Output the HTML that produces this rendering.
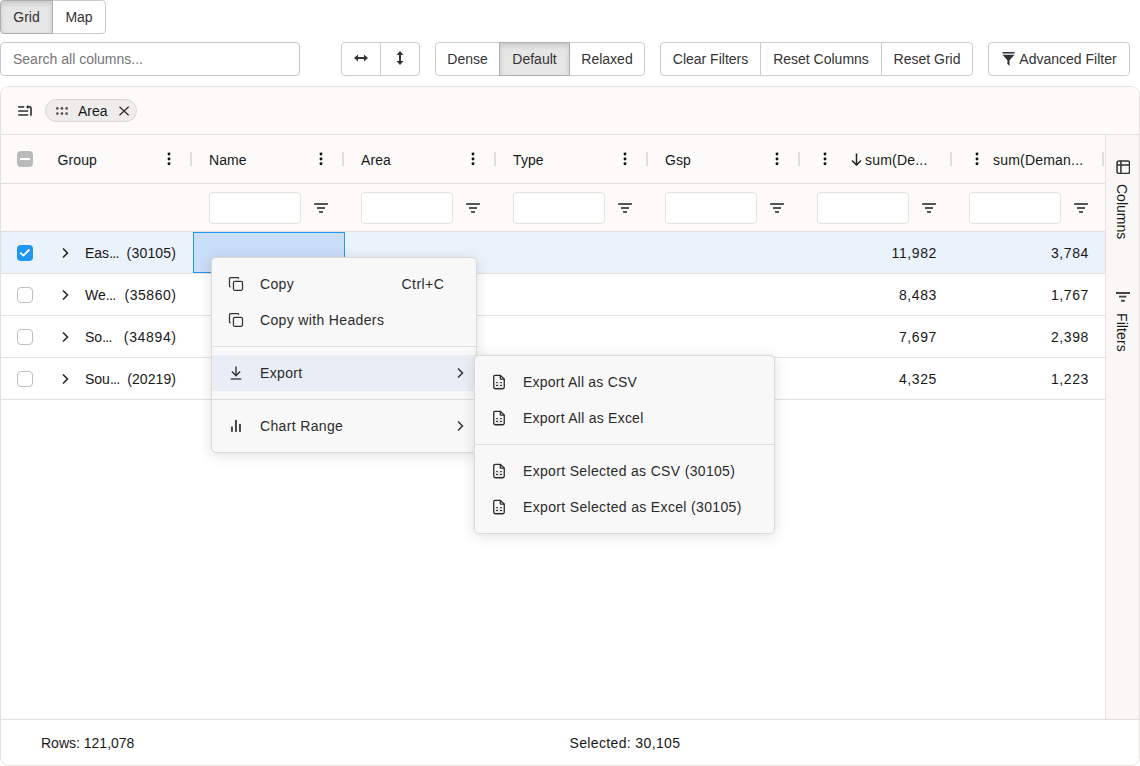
<!DOCTYPE html>
<html><head><meta charset="utf-8"><style>
*{box-sizing:border-box;margin:0;padding:0}
html,body{width:1140px;height:766px;overflow:hidden;background:#fff;font-family:"Liberation Sans",sans-serif;color:#212121}
div{position:absolute}
.btn{display:flex;align-items:center;justify-content:center;font-size:14px;color:#333;border:1px solid #ccc;background:#fff}
.btn.act{background:#e6e6e6;border-color:#adadad;box-shadow:inset 0 3px 5px rgba(0,0,0,.125);z-index:2}
.bg>div{position:relative;display:flex;align-items:center;justify-content:center;font-size:14px;color:#222;border-left:1px solid #c8c8c8;height:100%}
.bg>div:first-child{border-left:none}
.bg>div.act{background:#e5e5e5;box-shadow:inset 0 3px 5px rgba(0,0,0,.125)}
.search{left:0;top:42px;width:300px;height:34px;border:1px solid #c8c8c8;border-radius:4px;font-size:14px;color:#757575;padding-left:12px;line-height:32px}
.grid{left:0;top:86px;width:1140px;height:680px;border:1px solid #e6dfda;border-radius:9px;overflow:hidden;background:#fff}
.ht{font-size:14px;color:#181818;line-height:16px;letter-spacing:0.1px;white-space:nowrap}
.ct{font-size:14px;color:#181818;line-height:16px;letter-spacing:0.3px;white-space:nowrap}
.sep{width:2px;height:14px;background:#e6dcd8}
.kb{width:4px;height:14px}
.kb i{position:absolute;left:0;width:4px;height:4px;border-radius:50%;background:#111}
.finp{width:92px;height:32px;border:1px solid #e6dfda;border-radius:4px;background:#fff}
.fic{width:15px;height:11px}
.fic i{position:absolute;height:2px;background:#333}
.cb{width:16px;height:16px;border:1px solid #bfbfbf;border-radius:4px;background:#fff}
.menu{background:#f8f8f8;border:1px solid #dcdad8;border-radius:5px;box-shadow:0 2px 14px rgba(0,0,0,.13)}
.mt{font-size:14px;color:#2b2b2b;letter-spacing:0.35px;line-height:16px;white-space:nowrap}
.msep{left:0;right:0;height:1px;background:#e4dcd6}
</style></head><body>
<div class="btn act" style="left:0px;top:0px;width:53px;height:34px;border-radius:4px 0 0 4px">Grid</div>
<div class="btn" style="left:52px;top:0px;width:54px;height:34px;border-radius:0 4px 4px 0">Map</div>
<div class="search">Search all columns...</div>
<div class="btn" style="left:341px;top:42px;width:40px;height:34px;border-radius:4px 0 0 4px"><svg width="14" height="10" viewBox="0 0 14 10" style="margin-top:-2px"><path d="M0 5 L4 1.5 V8.5 Z M14 5 L10 1.5 V8.5 Z" fill="#333"/><rect x="3" y="4" width="8" height="2" fill="#333"/></svg></div>
<div class="btn" style="left:380px;top:42px;width:40px;height:34px;border-radius:0 4px 4px 0"><svg width="10" height="14" viewBox="0 0 10 14" style="margin-top:-2px"><path d="M5 0 L1.5 4 H8.5 Z M5 14 L1.5 10 H8.5 Z" fill="#333"/><rect x="4" y="3" width="2" height="8" fill="#333"/></svg></div>
<div class="btn" style="left:435px;top:42px;width:65px;height:34px;border-radius:4px 0 0 4px">Dense</div>
<div class="btn act" style="left:499px;top:42px;width:71px;height:34px;border-radius:0">Default</div>
<div class="btn" style="left:569px;top:42px;width:76px;height:34px;border-radius:0 4px 4px 0">Relaxed</div>
<div class="btn" style="left:660px;top:42px;width:101px;height:34px;border-radius:4px 0 0 4px">Clear Filters</div>
<div class="btn" style="left:760px;top:42px;width:122px;height:34px;border-radius:0">Reset Columns</div>
<div class="btn" style="left:881px;top:42px;width:92px;height:34px;border-radius:0 4px 4px 0">Reset Grid</div>
<div class="btn" style="left:988px;top:42px;width:142px;height:34px;border-radius:4px"><svg width="13" height="14" viewBox="0 0 13 14" style="margin-right:4px;margin-left:1px"><rect x="0.5" y="0" width="12" height="1.5" fill="#333"/><path d="M0.5 2.8 H12.5 L7.6 8.2 V13.8 L5.4 12 V8.2 Z" fill="#333"/></svg>Advanced Filter</div>
<div class="grid"><div style="left:0;top:0;width:1138px;height:48px;background:#fcfbfa;border-bottom:1px solid #e6dfda"></div><div style="left:0;top:48px;width:1104px;height:97px;background:#fcfbfa;border-bottom:1px solid #e6dfda"></div><div style="left:0;top:96px;width:1104px;height:1px;background:#e6dfda"></div><div style="left:0;top:145px;width:1104px;height:42px;background:#eaf2fc;border-bottom:1px solid #e6dfda"></div><div style="left:0;top:187px;width:1104px;height:42px;background:#fff;border-bottom:1px solid #e6dfda"></div><div style="left:0;top:229px;width:1104px;height:42px;background:#fff;border-bottom:1px solid #e6dfda"></div><div style="left:0;top:271px;width:1104px;height:42px;background:#fff;border-bottom:1px solid #e6dfda"></div><div style="left:1104px;top:48px;width:34px;height:584px;background:#f9f8f7;border-left:1px solid #e6dfda"></div><div style="left:0;top:632px;width:1138px;height:47px;border-top:1px solid #e6dfda;background:#fff"></div></div>
<svg style="position:absolute;left:18px;top:104px" width="15" height="13" viewBox="0 0 15 13"><rect x="0.2" y="2" width="6" height="1.8" fill="#4a4a4a"/><rect x="0.2" y="6.2" width="10" height="1.7" fill="#4a4a4a"/><rect x="0.2" y="10.1" width="10" height="1.7" fill="#4a4a4a"/><path d="M9.5 2.9 H11.5 Q13 2.9 13 4.4 V11.8" stroke="#333" stroke-width="1.7" fill="none"/><path d="M8 2.9 L10.3 0.9 V4.9 Z" fill="#222"/></svg>
<div style="left:45px;top:99px;width:92px;height:23px;border:1px solid #d9d6d3;border-radius:12px;background:#eeedec"></div>
<svg style="position:absolute;left:50px;top:100px" width="25" height="20" viewBox="0 0 25 20"><circle cx="7.3" cy="8.4" r="1.3" fill="#505050"/><circle cx="7.3" cy="13.6" r="1.3" fill="#505050"/><circle cx="11.95" cy="8.4" r="1.3" fill="#505050"/><circle cx="11.95" cy="13.6" r="1.3" fill="#505050"/><circle cx="16.6" cy="8.4" r="1.3" fill="#505050"/><circle cx="16.6" cy="13.6" r="1.3" fill="#505050"/></svg>
<div class="ht" style="left:78px;top:103px;letter-spacing:0px">Area</div>
<svg style="position:absolute;left:118px;top:105px" width="12" height="12" viewBox="0 0 12 12"><path d="M1.5 1.8 L10.7 10.3 M10.7 1.8 L1.5 10.3" stroke="#333" stroke-width="1.35"/></svg>
<div style="left:17px;top:151px;width:16px;height:16px;border-radius:4px;background:#bababa"></div>
<div style="left:20px;top:158px;width:10px;height:2px;background:#fff"></div>
<div class="ht" style="left:57.5px;top:152px">Group</div>
<svg style="position:absolute;left:167px;top:152px" width="4" height="14" viewBox="0 0 4 14"><circle cx="2" cy="2" r="1.45" fill="#111"/><circle cx="2" cy="7" r="1.45" fill="#111"/><circle cx="2" cy="11.7" r="1.45" fill="#111"/></svg>
<div class="sep" style="left:190px;top:152px"></div>
<div class="ht" style="left:209px;top:152px">Name</div>
<svg style="position:absolute;left:319px;top:152px" width="4" height="14" viewBox="0 0 4 14"><circle cx="2" cy="2" r="1.45" fill="#111"/><circle cx="2" cy="7" r="1.45" fill="#111"/><circle cx="2" cy="11.7" r="1.45" fill="#111"/></svg>
<div class="sep" style="left:342px;top:152px"></div>
<div class="finp" style="left:209px;top:192px"></div>
<svg style="position:absolute;left:314px;top:202px" width="15" height="12" viewBox="0 0 15 12"><rect x="0.1" y="1.1" width="13.8" height="1.8" fill="#444"/><rect x="3" y="5.1" width="8" height="1.8" fill="#444"/><rect x="5.1" y="9.1" width="3.9" height="1.8" fill="#444"/></svg>
<div class="ht" style="left:361px;top:152px">Area</div>
<svg style="position:absolute;left:471px;top:152px" width="4" height="14" viewBox="0 0 4 14"><circle cx="2" cy="2" r="1.45" fill="#111"/><circle cx="2" cy="7" r="1.45" fill="#111"/><circle cx="2" cy="11.7" r="1.45" fill="#111"/></svg>
<div class="sep" style="left:494px;top:152px"></div>
<div class="finp" style="left:361px;top:192px"></div>
<svg style="position:absolute;left:466px;top:202px" width="15" height="12" viewBox="0 0 15 12"><rect x="0.1" y="1.1" width="13.8" height="1.8" fill="#444"/><rect x="3" y="5.1" width="8" height="1.8" fill="#444"/><rect x="5.1" y="9.1" width="3.9" height="1.8" fill="#444"/></svg>
<div class="ht" style="left:513px;top:152px">Type</div>
<svg style="position:absolute;left:623px;top:152px" width="4" height="14" viewBox="0 0 4 14"><circle cx="2" cy="2" r="1.45" fill="#111"/><circle cx="2" cy="7" r="1.45" fill="#111"/><circle cx="2" cy="11.7" r="1.45" fill="#111"/></svg>
<div class="sep" style="left:646px;top:152px"></div>
<div class="finp" style="left:513px;top:192px"></div>
<svg style="position:absolute;left:618px;top:202px" width="15" height="12" viewBox="0 0 15 12"><rect x="0.1" y="1.1" width="13.8" height="1.8" fill="#444"/><rect x="3" y="5.1" width="8" height="1.8" fill="#444"/><rect x="5.1" y="9.1" width="3.9" height="1.8" fill="#444"/></svg>
<div class="ht" style="left:665px;top:152px">Gsp</div>
<svg style="position:absolute;left:775px;top:152px" width="4" height="14" viewBox="0 0 4 14"><circle cx="2" cy="2" r="1.45" fill="#111"/><circle cx="2" cy="7" r="1.45" fill="#111"/><circle cx="2" cy="11.7" r="1.45" fill="#111"/></svg>
<div class="sep" style="left:798px;top:152px"></div>
<div class="finp" style="left:665px;top:192px"></div>
<svg style="position:absolute;left:770px;top:202px" width="15" height="12" viewBox="0 0 15 12"><rect x="0.1" y="1.1" width="13.8" height="1.8" fill="#444"/><rect x="3" y="5.1" width="8" height="1.8" fill="#444"/><rect x="5.1" y="9.1" width="3.9" height="1.8" fill="#444"/></svg>
<svg style="position:absolute;left:823px;top:152px" width="4" height="14" viewBox="0 0 4 14"><circle cx="2" cy="2" r="1.45" fill="#111"/><circle cx="2" cy="7" r="1.45" fill="#111"/><circle cx="2" cy="11.7" r="1.45" fill="#111"/></svg>
<svg style="position:absolute;left:851px;top:153px" width="11" height="13" viewBox="0 0 11 13"><path d="M5.5 0.5 V12 M1 7.5 L5.5 12 L10 7.5" stroke="#222" stroke-width="1.5" fill="none"/></svg>
<div class="ht" style="left:865px;top:152px;letter-spacing:0.2px">sum(De...</div>
<div class="sep" style="left:950px;top:152px"></div>
<div class="finp" style="left:817px;top:192px"></div>
<svg style="position:absolute;left:922px;top:202px" width="15" height="12" viewBox="0 0 15 12"><rect x="0.1" y="1.1" width="13.8" height="1.8" fill="#444"/><rect x="3" y="5.1" width="8" height="1.8" fill="#444"/><rect x="5.1" y="9.1" width="3.9" height="1.8" fill="#444"/></svg>
<svg style="position:absolute;left:975px;top:152px" width="4" height="14" viewBox="0 0 4 14"><circle cx="2" cy="2" r="1.45" fill="#111"/><circle cx="2" cy="7" r="1.45" fill="#111"/><circle cx="2" cy="11.7" r="1.45" fill="#111"/></svg>
<div class="ht" style="left:993px;top:152px;letter-spacing:0.2px">sum(Deman...</div>
<div class="sep" style="left:1102px;top:152px"></div>
<div class="finp" style="left:969px;top:192px"></div>
<svg style="position:absolute;left:1074px;top:202px" width="15" height="12" viewBox="0 0 15 12"><rect x="0.1" y="1.1" width="13.8" height="1.8" fill="#444"/><rect x="3" y="5.1" width="8" height="1.8" fill="#444"/><rect x="5.1" y="9.1" width="3.9" height="1.8" fill="#444"/></svg>
<div style="left:17px;top:245px;width:16px;height:16px;border-radius:4px;background:#2196f3"></div>
<svg style="position:absolute;left:17px;top:245px" width="16" height="16" viewBox="0 0 16 16"><path d="M3.2 7.6 L6.4 10.6 L12.4 4.5" stroke="#fff" stroke-width="1.8" fill="none"/></svg>
<svg style="position:absolute;left:60.5px;top:247px" width="8" height="12" viewBox="0 0 8 12"><path d="M2 1.5 L6.5 6 L2 10.5" stroke="#222" stroke-width="1.5" fill="none"/></svg>
<div class="ct" style="left:85px;top:245px;letter-spacing:0">Eas<span style="letter-spacing:-0.7px">...</span></div>
<div class="ct" style="right:963.8px;top:245px;letter-spacing:0.2px">(30105)</div>
<div class="ct" style="right:203px;top:245px;letter-spacing:0.6px">11,982</div>
<div class="ct" style="right:51px;top:245px;letter-spacing:0.6px">3,784</div>
<div class="cb" style="left:17px;top:287px"></div>
<svg style="position:absolute;left:60.5px;top:289px" width="8" height="12" viewBox="0 0 8 12"><path d="M2 1.5 L6.5 6 L2 10.5" stroke="#222" stroke-width="1.5" fill="none"/></svg>
<div class="ct" style="left:85px;top:287px;letter-spacing:0">We<span style="letter-spacing:-0.7px">...</span></div>
<div class="ct" style="right:963.45px;top:287px;letter-spacing:0.55px">(35860)</div>
<div class="ct" style="right:203px;top:287px;letter-spacing:0.6px">8,483</div>
<div class="ct" style="right:51px;top:287px;letter-spacing:0.6px">1,767</div>
<div class="cb" style="left:17px;top:329px"></div>
<svg style="position:absolute;left:60.5px;top:331px" width="8" height="12" viewBox="0 0 8 12"><path d="M2 1.5 L6.5 6 L2 10.5" stroke="#222" stroke-width="1.5" fill="none"/></svg>
<div class="ct" style="left:85px;top:329px;letter-spacing:0">So<span style="letter-spacing:-0.7px">...</span></div>
<div class="ct" style="right:963.35px;top:329px;letter-spacing:0.65px">(34894)</div>
<div class="ct" style="right:203px;top:329px;letter-spacing:0.6px">7,697</div>
<div class="ct" style="right:51px;top:329px;letter-spacing:0.6px">2,398</div>
<div class="cb" style="left:17px;top:371px"></div>
<svg style="position:absolute;left:60.5px;top:373px" width="8" height="12" viewBox="0 0 8 12"><path d="M2 1.5 L6.5 6 L2 10.5" stroke="#222" stroke-width="1.5" fill="none"/></svg>
<div class="ct" style="left:85px;top:371px;letter-spacing:0">Sou<span style="letter-spacing:-0.7px">...</span></div>
<div class="ct" style="right:963.9px;top:371px;letter-spacing:0.1px">(20219)</div>
<div class="ct" style="right:203px;top:371px;letter-spacing:0.6px">4,325</div>
<div class="ct" style="right:51px;top:371px;letter-spacing:0.6px">1,223</div>
<div style="left:193px;top:232px;width:152px;height:41px;border:1px solid #2196f3;background:#c9def8"></div>
<svg style="position:absolute;left:1116px;top:160px" width="14" height="14" viewBox="0 0 14 14"><rect x="1.05" y="0.95" width="12.5" height="12.5" rx="2" stroke="#333" stroke-width="1.5" fill="none"/><path d="M1 4.9 H13.5 M4.9 1 V13.5" stroke="#333" stroke-width="1.5"/></svg>
<div class="ht" style="left:1114px;top:184px;writing-mode:vertical-rl;font-size:14px;letter-spacing:0px">Columns</div>
<svg style="position:absolute;left:1116px;top:292px" width="14" height="11" viewBox="0 0 14 11"><rect x="0" y="0" width="14" height="2" fill="#444"/><rect x="3" y="3.7" width="7.4" height="1.8" fill="#444"/><rect x="5.1" y="7.8" width="3.7" height="2" fill="#444"/></svg>
<div class="ht" style="left:1114px;top:313px;writing-mode:vertical-rl;font-size:14px;letter-spacing:0.1px">Filters</div>
<div class="ht" style="left:41px;top:735px;font-size:14px;letter-spacing:0">Rows: 121,078</div>
<div class="ht" style="left:569.5px;top:735px;font-size:14px;letter-spacing:0.36px">Selected: 30,105</div>
<div class="menu" style="left:211px;top:257px;width:266px;height:196px"></div>
<svg style="position:absolute;left:224px;top:272px" width="24" height="24" viewBox="0 0 24 24"><path d="M6.7 14.75 H6.3 Q5.5 14.75 5.5 13.9 V6.5 Q5.5 5.6 6.4 5.6 H13.9 Q14.7 5.6 14.7 6.4 V6.8" stroke="#333" stroke-width="1.25" fill="none"/><rect x="9.45" y="9.45" width="9.05" height="8.85" rx="1.2" stroke="#333" stroke-width="1.25" fill="none"/></svg>
<div class="mt" style="left:260px;top:276px">Copy</div>
<div class="mt" style="left:401.5px;top:276px;letter-spacing:0.45px">Ctrl+C</div>
<svg style="position:absolute;left:224px;top:308px" width="24" height="24" viewBox="0 0 24 24"><path d="M6.7 14.75 H6.3 Q5.5 14.75 5.5 13.9 V6.5 Q5.5 5.6 6.4 5.6 H13.9 Q14.7 5.6 14.7 6.4 V6.8" stroke="#333" stroke-width="1.25" fill="none"/><rect x="9.45" y="9.45" width="9.05" height="8.85" rx="1.2" stroke="#333" stroke-width="1.25" fill="none"/></svg>
<div class="mt" style="left:260px;top:312px">Copy with Headers</div>
<div class="msep" style="left:212px;width:264px;top:346px"></div>
<div style="left:212px;top:355px;width:264px;height:36px;background:#e9edf5"></div>
<svg style="position:absolute;left:228px;top:365px" width="16" height="16" viewBox="0 0 16 16"><path d="M8 1.5 V10.5 M3.9 6.6 L8 10.7 L12.1 6.6" stroke="#333" stroke-width="1.4" fill="none"/><path d="M2.7 14 H13.3" stroke="#4a4a4a" stroke-width="1.5"/></svg>
<div class="mt" style="left:260px;top:365px">Export</div>
<svg style="position:absolute;left:456px;top:367px" width="8" height="12" viewBox="0 0 8 12"><path d="M2 1.5 L6.5 6 L2 10.5" stroke="#333" stroke-width="1.5" fill="none"/></svg>
<div class="msep" style="left:212px;width:264px;top:399px"></div>
<svg style="position:absolute;left:228px;top:418px" width="16" height="16" viewBox="0 0 16 16"><rect x="2.95" y="8.6" width="2" height="5.3" fill="#4a4a4a"/><rect x="6.97" y="1.9" width="2" height="12" fill="#4a4a4a"/><rect x="10.98" y="5.9" width="2" height="8" fill="#4a4a4a"/></svg>
<div class="mt" style="left:260px;top:418px">Chart Range</div>
<svg style="position:absolute;left:456px;top:420px" width="8" height="12" viewBox="0 0 8 12"><path d="M2 1.5 L6.5 6 L2 10.5" stroke="#333" stroke-width="1.5" fill="none"/></svg>
<div class="menu" style="left:474px;top:355px;width:301px;height:179px"></div>
<svg style="position:absolute;left:492px;top:374px" width="14" height="16" viewBox="0 0 14 16"><path d="M3 1.35 H8.3 L12.25 5.1 V13 A1.75 1.75 0 0 1 10.5 14.75 H3.5 A1.75 1.75 0 0 1 1.75 13 V2.6 A1.25 1.25 0 0 1 3 1.35 Z" stroke="#2a2a2a" stroke-width="1.3" fill="none"/><path d="M8.3 1.35 V4.4 Q8.3 5.1 9 5.1 H12.25" stroke="#2a2a2a" stroke-width="1.3" fill="none"/><path d="M3 10 H11 M3 12.9 H11 M7 8 V14" stroke="#ccc" stroke-width="0.6"/><ellipse cx="5" cy="8.6" rx="1.05" ry="0.65" fill="#222"/><ellipse cx="9" cy="8.6" rx="1.05" ry="0.65" fill="#222"/><ellipse cx="5" cy="11.4" rx="1.05" ry="0.65" fill="#222"/><ellipse cx="9" cy="11.4" rx="1.05" ry="0.65" fill="#222"/></svg>
<div class="mt" style="left:523px;top:374px;letter-spacing:0.21px">Export All as CSV</div>
<svg style="position:absolute;left:492px;top:410px" width="14" height="16" viewBox="0 0 14 16"><path d="M3 1.35 H8.3 L12.25 5.1 V13 A1.75 1.75 0 0 1 10.5 14.75 H3.5 A1.75 1.75 0 0 1 1.75 13 V2.6 A1.25 1.25 0 0 1 3 1.35 Z" stroke="#2a2a2a" stroke-width="1.3" fill="none"/><path d="M8.3 1.35 V4.4 Q8.3 5.1 9 5.1 H12.25" stroke="#2a2a2a" stroke-width="1.3" fill="none"/><path d="M3 10 H11 M3 12.9 H11 M7 8 V14" stroke="#ccc" stroke-width="0.6"/><ellipse cx="5" cy="8.6" rx="1.05" ry="0.65" fill="#222"/><ellipse cx="9" cy="8.6" rx="1.05" ry="0.65" fill="#222"/><ellipse cx="5" cy="11.4" rx="1.05" ry="0.65" fill="#222"/><ellipse cx="9" cy="11.4" rx="1.05" ry="0.65" fill="#222"/></svg>
<div class="mt" style="left:523px;top:410px;letter-spacing:0.24px">Export All as Excel</div>
<svg style="position:absolute;left:492px;top:463px" width="14" height="16" viewBox="0 0 14 16"><path d="M3 1.35 H8.3 L12.25 5.1 V13 A1.75 1.75 0 0 1 10.5 14.75 H3.5 A1.75 1.75 0 0 1 1.75 13 V2.6 A1.25 1.25 0 0 1 3 1.35 Z" stroke="#2a2a2a" stroke-width="1.3" fill="none"/><path d="M8.3 1.35 V4.4 Q8.3 5.1 9 5.1 H12.25" stroke="#2a2a2a" stroke-width="1.3" fill="none"/><path d="M3 10 H11 M3 12.9 H11 M7 8 V14" stroke="#ccc" stroke-width="0.6"/><ellipse cx="5" cy="8.6" rx="1.05" ry="0.65" fill="#222"/><ellipse cx="9" cy="8.6" rx="1.05" ry="0.65" fill="#222"/><ellipse cx="5" cy="11.4" rx="1.05" ry="0.65" fill="#222"/><ellipse cx="9" cy="11.4" rx="1.05" ry="0.65" fill="#222"/></svg>
<div class="mt" style="left:523px;top:463px;letter-spacing:0.33px">Export Selected as CSV (30105)</div>
<svg style="position:absolute;left:492px;top:499px" width="14" height="16" viewBox="0 0 14 16"><path d="M3 1.35 H8.3 L12.25 5.1 V13 A1.75 1.75 0 0 1 10.5 14.75 H3.5 A1.75 1.75 0 0 1 1.75 13 V2.6 A1.25 1.25 0 0 1 3 1.35 Z" stroke="#2a2a2a" stroke-width="1.3" fill="none"/><path d="M8.3 1.35 V4.4 Q8.3 5.1 9 5.1 H12.25" stroke="#2a2a2a" stroke-width="1.3" fill="none"/><path d="M3 10 H11 M3 12.9 H11 M7 8 V14" stroke="#ccc" stroke-width="0.6"/><ellipse cx="5" cy="8.6" rx="1.05" ry="0.65" fill="#222"/><ellipse cx="9" cy="8.6" rx="1.05" ry="0.65" fill="#222"/><ellipse cx="5" cy="11.4" rx="1.05" ry="0.65" fill="#222"/><ellipse cx="9" cy="11.4" rx="1.05" ry="0.65" fill="#222"/></svg>
<div class="mt" style="left:523px;top:499px;letter-spacing:0.34px">Export Selected as Excel (30105)</div>
<div class="msep" style="left:475px;width:299px;top:444px"></div>
</body></html>
